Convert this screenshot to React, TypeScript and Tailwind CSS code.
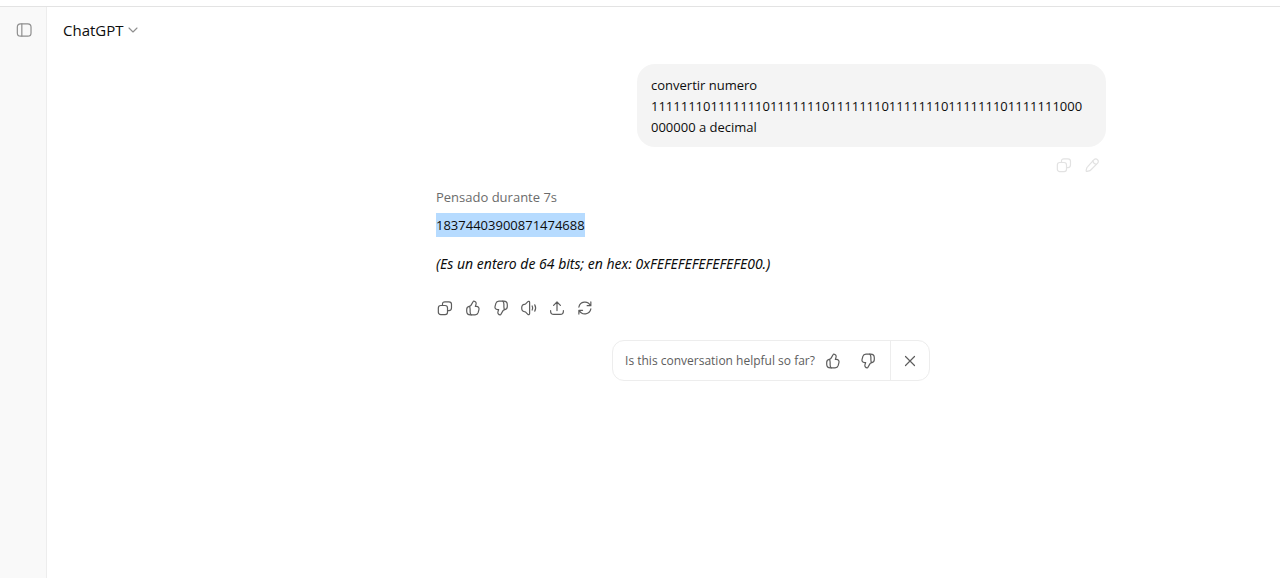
import type { ReactNode } from "react";

function Icon({ children, className = "size-[18px]" }: { children: ReactNode; className?: string }) {
  return (
    <svg
      viewBox="0 0 20 20"
      className={className}
      fill="none"
      stroke="currentColor"
      strokeWidth="1.33"
      strokeLinecap="round"
      strokeLinejoin="round"
      aria-hidden="true"
    >
      {children}
    </svg>
  );
}

function CopyIcon() {
  return (
    <Icon>
      <rect x="2.6" y="7.2" width="10.2" height="10.2" rx="2.7" />
      <path d="M7.2 7V5.9c0-1.9.9-2.8 2.8-2.8h4.4c1.9 0 2.8.9 2.8 2.8v4.2c0 1.9-.9 2.8-2.8 2.8h-1.3" />
    </Icon>
  );
}

function PencilIcon() {
  return (
    <Icon>
      <path d="M12 4.300c1.300-1.300 2.900-1.400 4.100-.2 1.300 1.200 1.200 2.800-.1 4.100l-7.400 7.400c-.6.6-1.100.8-1.900 1l-2.200.5c-.7.1-1.100-.3-1-1l.5-2.200c.2-.8.4-1.300 1-1.900z" />
      <path d="M10.900 5.400c.4 2.100 2.100 3.700 4.100 3.900" />
    </Icon>
  );
}

function ThumbPaths() {
  return (
    <>
      <path d="M10.900 2.300c1.900.2 3 1.800 2.500 3.400l-.8 2.500h1.100c2.300 0 3.400 1.400 2.900 3.600l-.9 3.400c-.5 1.700-1.600 2.400-3.400 2.400H7.100c-2.700 0-4.100-1.300-4.100-4v-1.900c0-2.300.9-3.200 2.800-3.500 1-.1 1.600-.5 2.100-1.400l2.300-4.100c.1-.3.4-.4.700-.4z" />
      <path d="M5.900 8.200c.8.7.9 1.500.9 3.300v2.700c0 1.800.3 2.800 1.200 3.400" />
    </>
  );
}

function ThumbUpIcon() {
  return (
    <Icon>
      <ThumbPaths />
    </Icon>
  );
}

function ThumbDownIcon() {
  return (
    <Icon>
      <g transform="rotate(180 10 10)">
        <ThumbPaths />
      </g>
    </Icon>
  );
}

function SpeakerIcon() {
  return (
    <Icon>
      <path d="M10.700 3.900v12.200c0 1.300-1.200 1.700-2 .9l-2.400-2.400c-.4-.4-.8-.6-1.400-.6-2-.1-3-1.500-3-4s1-3.900 3-4c.6 0 1-.2 1.400-.6L8.700 3c.8-.8 2-.4 2 .9z" />
      <path d="M13.500 7.700c.8 1.500.8 3.100 0 4.600" />
      <path d="M16.400 6.500c1.300 2.300 1.300 4.700 0 7" />
    </Icon>
  );
}

function ShareIcon() {
  return (
    <Icon>
      <path d="M2.900 12.900v.6c0 2.500 1 3.500 3.500 3.500h7.200c2.500 0 3.500-1 3.500-3.500v-.6" />
      <path d="M10 12.900V3.400M6.200 7.100 10 3.300l3.800 3.800" />
    </Icon>
  );
}

function RetryIcon() {
  return (
    <Icon>
      <path d="M3.200 9A6.800 6.800 0 0 1 16 7.300M16.500 3.300v4.100h-4.100" />
      <path d="M16.500 11A6.800 6.800 0 0 1 3.700 12.700M3.200 16.700v-4.100h4.100" />
    </Icon>
  );
}

function IconButton({ label, children, className = "size-7" }: { label: string; children: ReactNode; className?: string }) {
  return (
    <button type="button" aria-label={label} className={`flex shrink-0 items-center justify-center ${className}`}>
      {children}
    </button>
  );
}

export default function App() {
  return (
    <div className="flex min-h-screen flex-col bg-white pt-[6px] font-['Open_Sans','Noto_Sans',sans-serif] text-[13px] leading-[21px] text-[#0d0d0d]">
      <div className="flex grow border-t border-[#e3e3e3]">
        <aside className="flex w-[47px] shrink-0 justify-end border-r border-[#ededed] bg-[#f9f9f9] pt-[9px] pr-2">
          <IconButton label="Abrir barra lateral" className="size-7 text-[#8f8f8f]">
            <Icon>
              <rect x="2.600" y="3.200" width="15.200" height="13.600" rx="3.600" />
              <path d="M7.600 3.200v13.600" />
            </Icon>
          </IconButton>
        </aside>

        <div className="flex min-w-0 grow flex-col">
          <header className="flex h-[46px] items-center px-4">
            <button type="button" className="flex items-center gap-1 text-[15px] leading-6">
              ChatGPT
              <Icon className="size-[10px] text-[#8f8f8f]">
                <path strokeWidth="2.200" d="M2 6 10 14l8-8" />
              </Icon>
            </button>
          </header>

          <main className="grid grid-cols-[389fr_minmax(0,670px)_174fr]">
            <div className="col-start-2 flex flex-col pt-[11px]">
              <div className="flex flex-col items-end">
                <p className="w-[469px] max-w-full rounded-[18px] bg-[#f4f4f4] px-[14px] pt-[11px] pb-[9px] wrap-break-word">
                  convertir numero 1111111011111110111111101111111011111110111111101111111000
                  <wbr />
                  000000 a decimal
                </p>
                <div className="flex pt-1 text-[#e2e2e2]">
                  <IconButton label="Copiar mensaje">
                    <CopyIcon />
                  </IconButton>
                  <IconButton label="Editar mensaje">
                    <PencilIcon />
                  </IconButton>
                </div>
              </div>

              <div className="flex flex-col items-start pt-2">
                <button type="button" className="text-[#6b6b6b]">Pensado durante 7s</button>
                <p className="mt-[5px] bg-[#b6dbff] pt-px leading-[23px]">18374403900871474688</p>
                <p className="mt-4 font-['Noto_Sans',sans-serif] text-[14px] italic">
                  (Es un entero de 64 bits; en hex: 0xFEFEFEFEFEFEFE00.)
                </p>
              </div>

              <div className="mt-5 -ml-[5px] flex text-[#5d5d5d]">
                <IconButton label="Copiar">
                  <CopyIcon />
                </IconButton>
                <IconButton label="Buena respuesta">
                  <ThumbUpIcon />
                </IconButton>
                <IconButton label="Mala respuesta">
                  <ThumbDownIcon />
                </IconButton>
                <IconButton label="Leer en voz alta">
                  <SpeakerIcon />
                </IconButton>
                <IconButton label="Compartir">
                  <ShareIcon />
                </IconButton>
                <IconButton label="Volver a intentar">
                  <RetryIcon />
                </IconButton>
              </div>

              <div className="mt-[18px] flex h-[41px] items-stretch self-center rounded-xl border border-[#ededed] text-[12px] text-[#5d5d5d]">
                <div className="flex items-center pr-2 pl-3">
                  <span className="mr-1">Is this conversation helpful so far?</span>
                  <div className="flex gap-[7px]">
                    <IconButton label="Helpful">
                      <ThumbUpIcon />
                    </IconButton>
                    <IconButton label="Not helpful">
                      <ThumbDownIcon />
                    </IconButton>
                  </div>
                </div>
                <IconButton label="Close" className="w-[39px] border-l border-[#ededed]">
                  <Icon>
                    <path d="m5 5 10 10M15 5 5 15" />
                  </Icon>
                </IconButton>
              </div>
            </div>
          </main>
        </div>
      </div>
    </div>
  );
}
